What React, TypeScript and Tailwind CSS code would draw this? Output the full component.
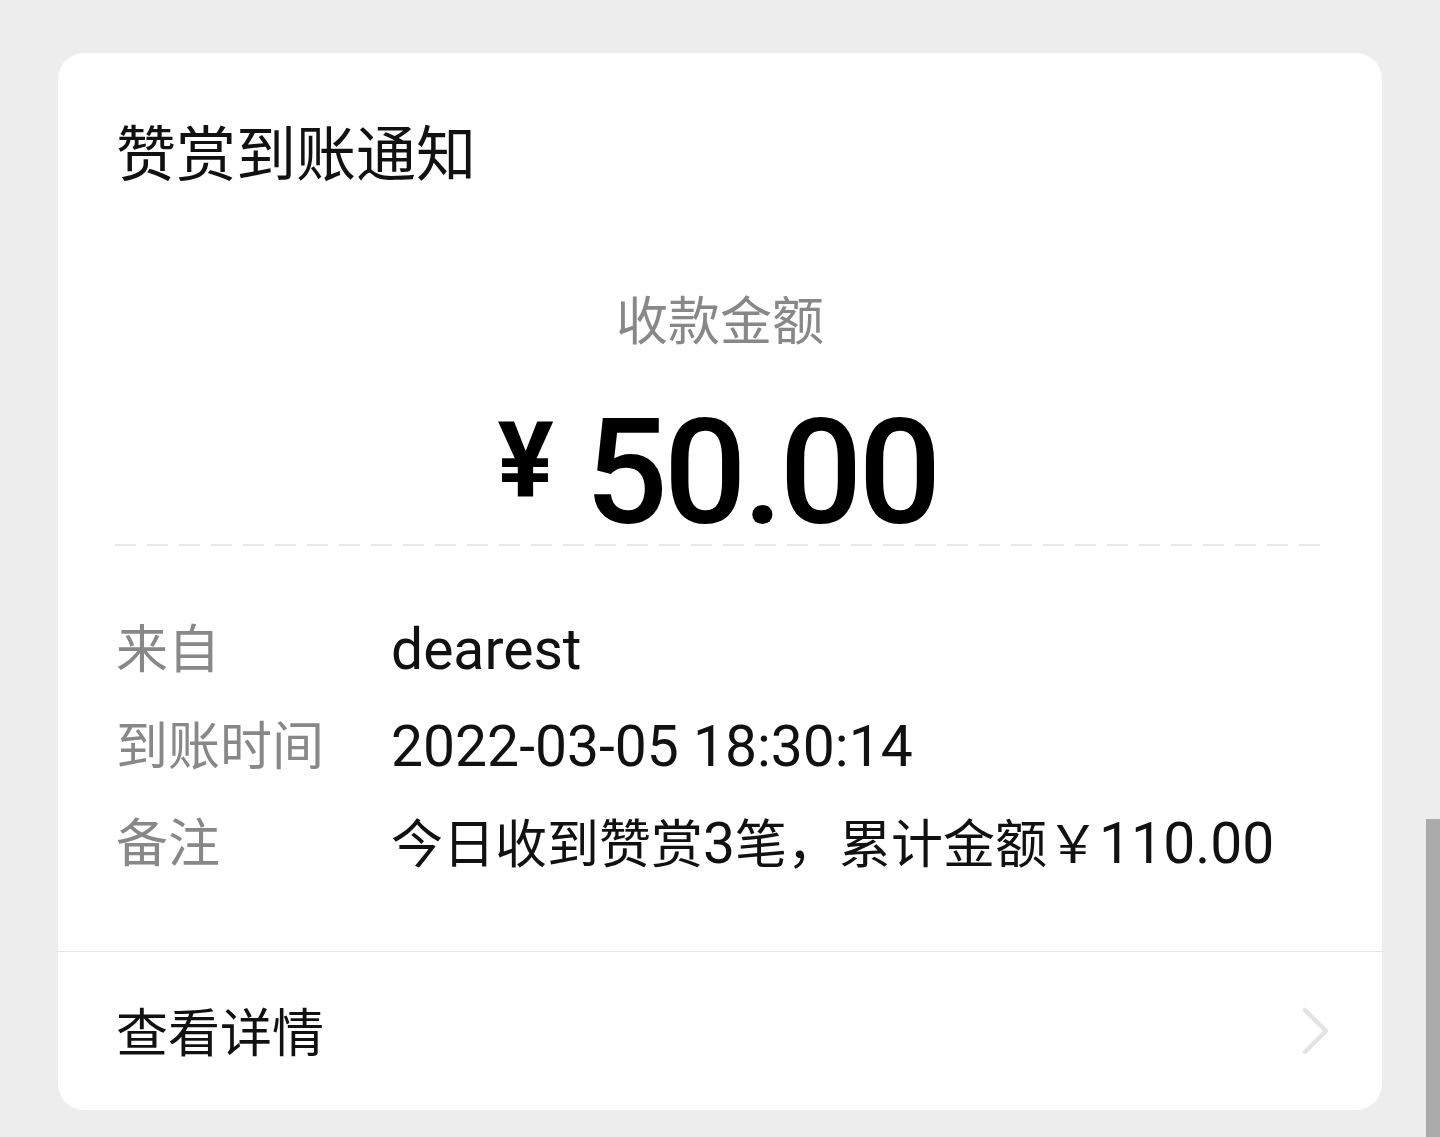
const cjk = "font-['Roboto','Noto_Sans_CJK_SC',sans-serif]";

const ChevronRight = () => (
  <svg width="28" height="50" viewBox="0 0 28 50" fill="none">
    <path d="M3 4 L24 25 L3 46" stroke="#e3e3e3" strokeWidth="4.5" strokeLinecap="round" strokeLinejoin="round" />
  </svg>
);

// latin runs are set a bit larger so they match the wider Latin face of the original
const Mixed = ({ text }: { text: string }) => (
  <>
    {text.split(/([\x20-\x7E]+)/).map((part, i) =>
      /[\x20-\x7E]/.test(part) ? (
        <span key={i} className="text-[57px]">
          {part}
        </span>
      ) : (
        <span key={i}>{part}</span>
      )
    )}
  </>
);

const rows = [
  { label: "来自", value: "dearest" },
  { label: "到账时间", value: "2022-03-05 18:30:14" },
  { label: "备注", value: "今日收到赞赏3笔，累计金额￥110.00" },
];

export default function App() {
  return (
    <div className={`relative min-h-[1137px] bg-[#ededed] px-[58px] pt-[53px] ${cjk}`}>
      <div className="rounded-[26px] bg-white">
        <div className="px-[58px] pt-[73px]">
          <h1 className="text-[60px] leading-[60px] text-[#111]">赞赏到账通知</h1>
        </div>

        <div className="mt-[111px] flex flex-col items-center">
          <div className="text-[52px] leading-[52px] text-[#888]">收款金额</div>
          <div className="mt-[65px] mr-[5px] flex items-start text-black">
            <span className="mt-[-5px] text-[105px] leading-[105px] font-bold">¥</span>
            <span className="ml-[31px] text-[146px] leading-[120px] font-medium tracking-[-4px]">50.00</span>
          </div>
        </div>

        <div className="mx-[57px] mt-[10px] h-[2px] bg-[repeating-linear-gradient(to_right,#e8e8e8_0_21px,transparent_21px_32px)]" />

        <div className="px-[58px] pt-[79px] pb-[80px] flex flex-col gap-[45px]">
          {rows.map((r) => (
            <div key={r.label} className="flex h-[52px] items-center text-[52px] leading-[52px] whitespace-nowrap">
              <div className="w-[275px] shrink-0 text-[#888]">{r.label}</div>
              <div className="text-[#111]">
                <Mixed text={r.value} />
              </div>
            </div>
          ))}
        </div>

        <div className="h-px bg-[#e5e5e5]" />

        <div className="flex h-[158px] items-center justify-between pl-[58px] pr-[52px]">
          <span className="mt-[8px] text-[52px] leading-[52px] text-[#111]">查看详情</span>
          <ChevronRight />
        </div>
      </div>

      <div className="absolute right-0 top-[819px] h-[318px] w-[14px] bg-[#ababab]" />
    </div>
  );
}
